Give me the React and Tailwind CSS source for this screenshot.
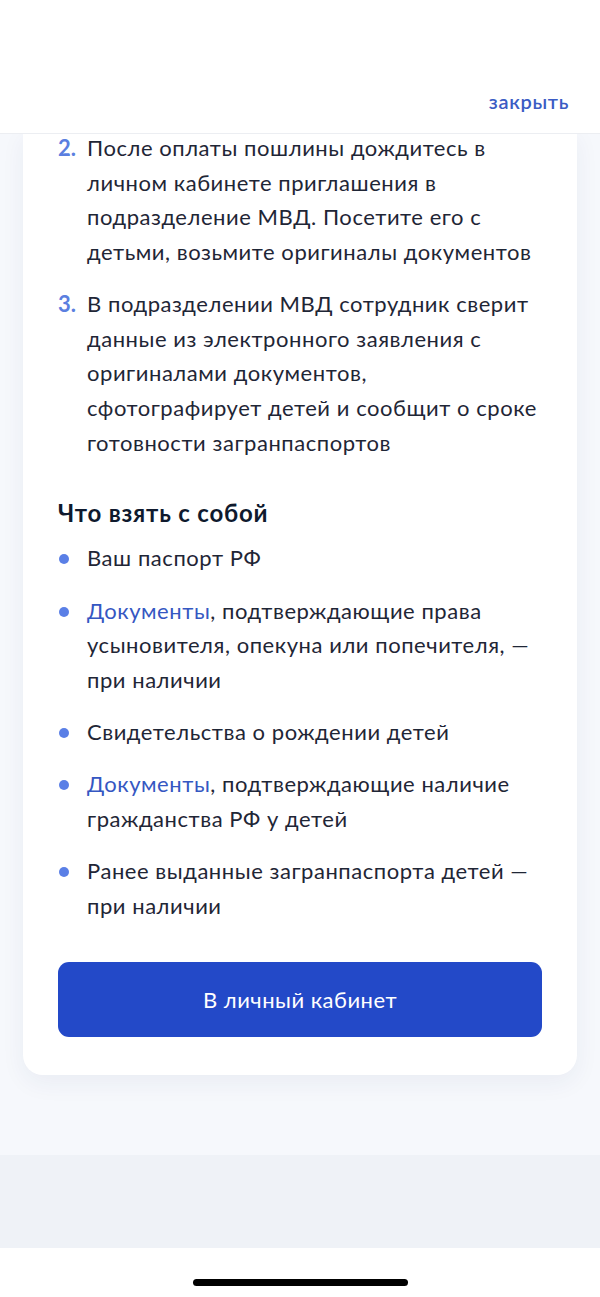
import React from "react";

const steps = [
  {
    n: "2.",
    lines: [
      "После оплаты пошлины дождитесь в",
      "личном кабинете приглашения в",
      "подразделение МВД. Посетите его с",
      "детьми, возьмите оригиналы документов",
    ],
  },
  {
    n: "3.",
    lines: [
      "В подразделении МВД сотрудник сверит",
      "данные из электронного заявления с",
      "оригиналами документов,",
      "сфотографирует детей и сообщит о сроке",
      "готовности загранпаспортов",
    ],
  },
];

const items = [
  { lines: ["Ваш паспорт РФ"] },
  { link: "Документы", lines: [", подтверждающие права", "усыновителя, опекуна или попечителя, —", "при наличии"] },
  { lines: ["Свидетельства о рождении детей"] },
  { link: "Документы", lines: [", подтверждающие наличие", "гражданства РФ у детей"] },
  { lines: ["Ранее выданные загранпаспорта детей —", "при наличии"] },
];

function Lines({ lines, link }) {
  return (
    <span className="whitespace-nowrap">
      {lines.map((l, i) => (
        <React.Fragment key={i}>
          {i === 0 && link && <span className="text-[#3557c2]">{link}</span>}
          {l}
          {i < lines.length - 1 && <br />}
        </React.Fragment>
      ))}
    </span>
  );
}

export default function App() {
  return (
    <div
      className="w-[600px] min-h-[1297px] flex flex-col bg-white text-[#1f2636]"
      style={{ fontFamily: "Lato, 'Noto Sans', sans-serif" }}
    >
      {/* Header */}
      <div className="h-[134px] bg-white border-b border-[#eceef2] flex items-end justify-end px-[31px] pb-[19px] relative z-10">
        <button className="text-[20px] tracking-[0.7px] font-semibold text-[#3b5cc4] leading-[26px]">закрыть</button>
      </div>

      {/* Content */}
      <div className="bg-[#f6f8fc] pb-[80px]">
        <div className="mx-[23px] bg-white rounded-b-[20px] shadow-[0_8px_24px_rgba(30,50,100,0.06)] px-[35px] pb-[38px] -mt-[3px]">
          <ol className="flex flex-col gap-[17px]">
            {steps.map((s) => (
              <li key={s.n} className="flex text-[22px] tracking-[0.55px] leading-[34.7px]">
                <span className="w-[29px] shrink-0 text-[#5b7fe0] font-bold tracking-normal">{s.n}</span>
                <Lines lines={s.lines} />
              </li>
            ))}
          </ol>

          <h3 className="mt-[38px] text-[24px] tracking-[0.8px] leading-[30px] font-bold text-[#0f1a2e]">Что взять с собой</h3>

          <ul className="mt-[13px] flex flex-col gap-[17.5px]">
            {items.map((it, i) => (
              <li key={i} className="flex text-[22px] tracking-[0.55px] leading-[34.7px]">
                <span className="w-[29px] shrink-0 flex items-start pt-[13px] pl-[1px]">
                  <span className="w-[10px] h-[10px] rounded-full bg-[#5a7fe6]" />
                </span>
                <Lines lines={it.lines} link={it.link} />
              </li>
            ))}
          </ul>

          <button className="mt-[38px] w-full h-[75px] rounded-[11px] bg-[#2349c8] text-white text-[22px] tracking-[0.5px]">
            В личный кабинет
          </button>
        </div>
      </div>

      {/* Footer grey band */}
      <div className="h-[93px] bg-[#eff2f7]" />

      {/* Home indicator */}
      <div className="flex-1 bg-white flex justify-center pt-[31px]">
        <div className="w-[215px] h-[7px] rounded-full bg-black" />
      </div>
    </div>
  );
}
